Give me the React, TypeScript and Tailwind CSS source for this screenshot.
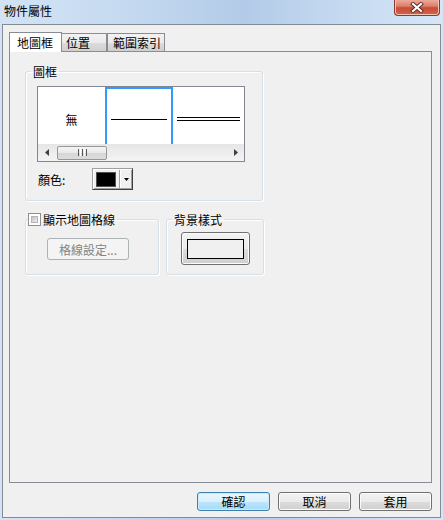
import React from 'react';

const font = "font-['Noto_Sans_CJK_TC','Liberation_Sans',sans-serif]";

const WinButton: React.FC<{ className?: string; children?: React.ReactNode; primary?: boolean }> = ({ className = '', children, primary }) => (
  <div
    className={
      'flex items-center justify-center rounded-[3px] border text-[12px] leading-[15px] text-black ' +
      (primary
        ? 'border-[#3c7fb1] bg-[linear-gradient(180deg,#eaf6fd_0%,#d9f0fc_50%,#bee6fd_51%,#a7d9f5_100%)] shadow-[inset_0_0_0_1px_#c8ecfc]'
        : 'border-[#707070] bg-[linear-gradient(180deg,#f2f2f2_0%,#ebebeb_50%,#dddddd_51%,#cfcfcf_100%)] shadow-[inset_0_0_0_1px_#fcfcfc]') +
      ' ' +
      className
    }
  >
    {children}
  </div>
);

const CloseGlyph = () => (
  <svg width="14" height="11" viewBox="0 0 14 11">
    <path d="M3 2 L11 9 M11 2 L3 9" stroke="#5a2a22" strokeWidth="4" strokeLinecap="square" />
    <path d="M3 2 L11 9 M11 2 L3 9" stroke="#ffffff" strokeWidth="2.2" strokeLinecap="square" />
  </svg>
);

export default function App() {
  return (
    <div
      className={`${font} w-[443px] h-[520px] flex flex-col bg-[linear-gradient(90deg,#d3e3f5_0%,#c4d9f0_30%,#b3cbe8_55%,#c3d8f0_75%,#d6e6f7_100%)] overflow-hidden`}
    >
      {/* title bar */}
      <div className="h-[24px] flex items-start shrink-0">
        <span className="pl-[4px] pt-[3px] text-[12px] leading-[15px] text-black">物件屬性</span>
        <div className="ml-auto mr-[3px] w-[46px] h-[17px] -mt-[1px] rounded-b-[4px] border border-t-0 border-[#8b3a2e] bg-[linear-gradient(180deg,#eeb1a3_0%,#de7d69_45%,#c94c34_55%,#d2634a_100%)] shadow-[inset_0_0_0_1px_#f2c3b8] flex items-center justify-center">
          <CloseGlyph />
        </div>
      </div>

      {/* client */}
      <div className="flex-1 mx-[2px] mb-[2px] border border-[#838b93] bg-[#f0f0f0] pt-[7px] pl-[6px] pr-[8px] flex flex-col text-[12px] leading-[15px] text-black">
        {/* tabs */}
        <div className="h-[19px] flex items-end">
          <div className="relative z-10 w-[53px] h-[20px] -mb-[1px] bg-white border border-b-0 border-[#898c95] pl-[7px] pt-[2px]">地圖框</div>
          <div className="w-[46px] h-[18px] -ml-[1px] border border-b-0 border-[#898c95] bg-[linear-gradient(180deg,#f2f2f2_0%,#ebebeb_50%,#dddddd_51%,#cfcfcf_100%)] pl-[4px] pt-[1px]">位置</div>
          <div className="w-[58px] h-[18px] border border-b-0 border-[#898c95] bg-[linear-gradient(180deg,#f2f2f2_0%,#ebebeb_50%,#dddddd_51%,#cfcfcf_100%)] pl-[5px] pt-[1px]">範圍索引</div>
        </div>

        {/* tab panel */}
        <div className="h-[432px] border border-[#898c95] bg-[#f0f0f0] pt-[12px] pl-[15px] flex flex-col items-start">
          <fieldset className="w-[238px] border border-[#d5dfe5] rounded-[3px] shadow-[inset_1px_1px_0_#ffffff,1px_1px_0_#ffffff] pb-[10px]">
            <legend className="ml-[5px] px-[2px]">圖框</legend>
            <div className="mt-[7px] ml-[11px] w-[208px] h-[76px] border border-[#828790] bg-white flex flex-col">
              <div className="h-[57px] flex">
                <div className="w-[67px] flex items-center justify-center pt-[8px]">無</div>
                <div className="w-[68px] border-2 border-b-0 border-[#3399ff] flex items-center px-[4px] pt-[6px]">
                  <div className="w-full h-[1px] bg-black" />
                </div>
                <div className="flex-1 flex flex-col justify-center px-[4px] pt-[6px] gap-[2px]">
                  <div className="w-full h-[1px] bg-black" />
                  <div className="w-full h-[1px] bg-black" />
                </div>
              </div>
              {/* scrollbar */}
              <div className="h-[17px] flex items-center bg-[linear-gradient(180deg,#e6e6e6_0%,#f4f4f4_100%)]">
                <div className="w-[17px] h-full flex items-center justify-center">
                  <svg width="4" height="7" viewBox="0 0 4 7"><path d="M4 0 L0 3.5 L4 7 Z" fill="#404040" /></svg>
                </div>
                <div className="ml-[2px] w-[50px] h-[14px] rounded-[2px] border border-[#979797] bg-[linear-gradient(180deg,#f5f5f5_0%,#e8e8e8_50%,#d6d6d6_51%,#dcdcdc_100%)] flex items-center justify-center gap-[1px]">
                  <div className="w-[1px] h-[7px] bg-[#5a5a5a]" />
                  <div className="w-[1px] h-[7px] bg-[#ffffff]" />
                  <div className="w-[1px] h-[7px] bg-[#5a5a5a]" />
                  <div className="w-[1px] h-[7px] bg-[#ffffff]" />
                  <div className="w-[1px] h-[7px] bg-[#5a5a5a]" />
                </div>
                <div className="ml-auto w-[17px] h-full flex items-center justify-center">
                  <svg width="4" height="7" viewBox="0 0 4 7"><path d="M0 0 L4 3.5 L0 7 Z" fill="#404040" /></svg>
                </div>
              </div>
            </div>
            <div className="mt-[6px] ml-[12px] flex items-center">
              <span className="w-[54px]">顏色:</span>
              <div className="w-[41px] h-[22px] border border-[#a0a0a0] border-r-[#404040] border-b-[#404040] bg-[#f0f0f0] shadow-[inset_1px_1px_0_#ffffff,inset_-1px_-1px_0_#a0a0a0] flex items-center pl-[3px]">
                <div className="w-[20px] h-[15px] bg-black border border-[#505050]" />
                <div className="ml-[3px] w-[1px] h-[18px] bg-[#a0a0a0] shadow-[1px_0_0_#ffffff]" />
                <div className="flex-1 flex items-center justify-center">
                  <svg width="5" height="3" viewBox="0 0 5 3"><path d="M0 0 L5 0 L2.5 3 Z" fill="#000" /></svg>
                </div>
              </div>
            </div>
          </fieldset>

          <div className="mt-[11px] flex items-start gap-[7px]">
            <fieldset className="w-[134px] h-[63px] border border-[#d5dfe5] rounded-[3px] shadow-[inset_1px_1px_0_#ffffff,1px_1px_0_#ffffff]">
              <legend className="ml-[2px] pr-[2px] flex items-center gap-[1px]">
                <span className="w-[13px] h-[13px] border border-[#8e8f8f] bg-white p-[2px] flex">
                  <span className="flex-1 border border-[#b5b5b5] bg-[linear-gradient(135deg,#bfc3c9_0%,#eeeeee_100%)]" />
                </span>
                <span className="ml-[1px]">顯示地圖格線</span>
              </legend>
              <div className="mt-[11px] ml-[21px] w-[82px] h-[22px] rounded-[3px] border border-[#adb2b5] bg-[#f4f4f4] flex items-center justify-center text-[#838383]">
                格線設定...
              </div>
            </fieldset>

            <fieldset className="w-[98px] h-[63px] border border-[#d5dfe5] rounded-[3px] shadow-[inset_1px_1px_0_#ffffff,1px_1px_0_#ffffff]">
              <legend className="ml-[5px] px-[2px]">背景樣式</legend>
              <WinButton className="mt-[5px] ml-[14px] w-[69px] h-[33px]">
                <div className="w-[57px] h-[20px] border border-black bg-[#f0f0f0]" />
              </WinButton>
            </fieldset>
          </div>
        </div>

        {/* bottom buttons */}
        <div className="pt-[9px] flex justify-end gap-[8px]">
          <WinButton primary className="w-[73px] h-[19px]">確認</WinButton>
          <WinButton className="w-[73px] h-[19px]">取消</WinButton>
          <WinButton className="w-[73px] h-[19px]">套用</WinButton>
        </div>
      </div>
    </div>
  );
}
